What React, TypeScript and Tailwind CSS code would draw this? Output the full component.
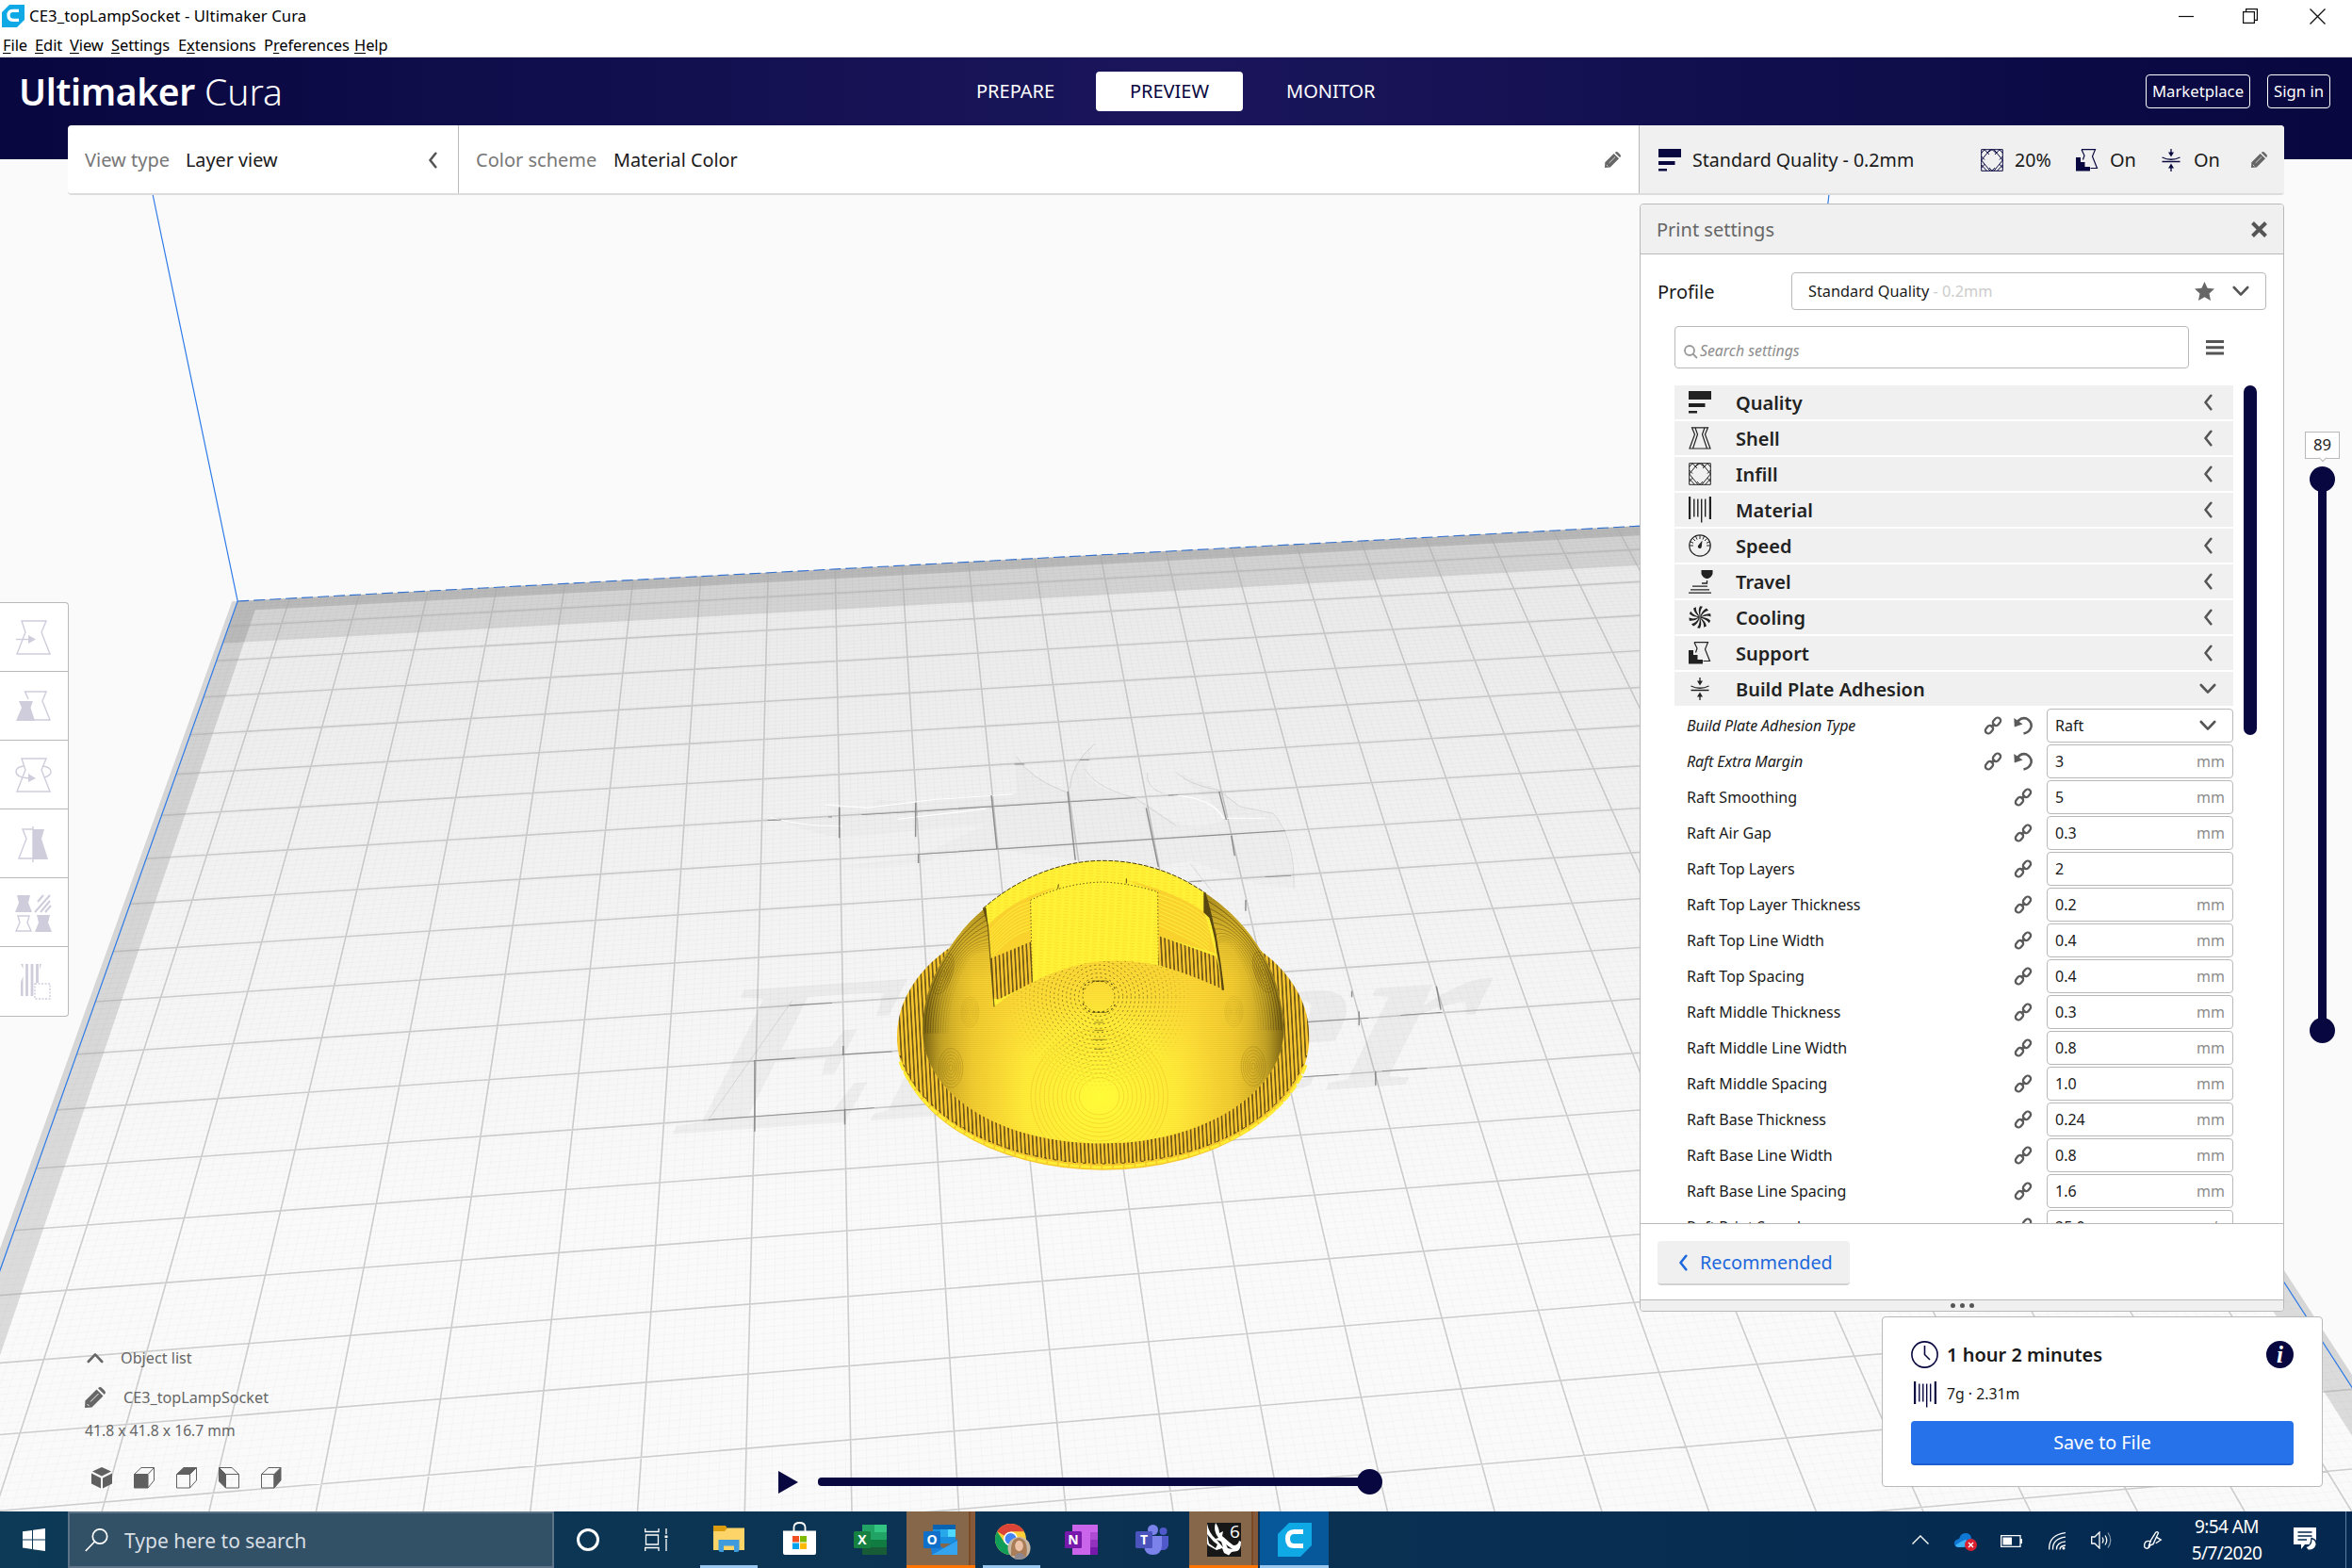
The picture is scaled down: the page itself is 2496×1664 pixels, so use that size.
import React from "react";

/* ---------- build plate projection ---------- */
const pt = (k: number, j: number): [number, number] => {
  const a = 0.0176 + 0.0426 * k;
  const b = -11.993 - 0.3746 * j;
  const h = 31143 / (a - b);
  return [857 + h * a, h - 1065];
};
const f = (p: [number, number]) => `${p[0].toFixed(1)} ${p[1].toFixed(1)}`;
const quad = (k0: number, k1: number, j0: number, j1: number) =>
  `M${f(pt(k0, j1))}L${f(pt(k1, j1))}L${f(pt(k1, j0))}L${f(pt(k0, j0))}Z`;
const K0 = -8.75, K1 = 14.75, J0 = -5.75, J1 = 17.75;
let major = "";
for (let k = -8; k <= 14; k++) major += `M${f(pt(k, J0))}L${f(pt(k, J1))}`;
for (let j = -5; j <= 17; j++) major += `M${f(pt(K0, j))}L${f(pt(K1, j))}`;
let minor = "";
for (let n = 0; n <= 235; n++) {
  minor += `M${f(pt(K0 + n / 10, J0))}L${f(pt(K0 + n / 10, J1))}`;
  minor += `M${f(pt(K0, J0 + n / 10))}L${f(pt(K1, J0 + n / 10))}`;
}

const rings = (n: number, step: number) => Array.from({ length: n }, (_, i) => (i + 1) * step);

function Model() {
  const body =
    "M118 590C116 520 130 455 165 385C205 305 255 240 318 190L326 260L343 505C390 470 430 445 500 412C570 380 640 362 700 360C760 358 820 362 870 374C950 395 1020 425 1077 452L1050 260L1015 142C1110 205 1165 275 1205 345C1245 415 1265 500 1267 580C1266 780 1010 940 690 940C370 940 125 790 118 590Z";
  return (
    <g transform="translate(940 900) scale(0.33333)">
      <defs>
        <pattern id="raft" width="12.6" height="12" patternUnits="userSpaceOnUse" patternTransform="rotate(-3)">
          <rect width="12.6" height="12" fill="#f7c730" />
          <rect width="5" height="12" fill="#6f5516" />
        </pattern>
        <pattern id="layers" width="6" height="6" patternUnits="userSpaceOnUse">
          <rect width="6" height="3" fill="#e8b21e" fillOpacity="0.4" />
        </pattern>
        <pattern id="flat" width="24" height="9" patternUnits="userSpaceOnUse" patternTransform="rotate(3)">
          <rect width="24" height="9" fill="#fff236" />
          <rect width="15" height="3" fill="#fde02e" />
        </pattern>
        <linearGradient id="side">
          <stop offset="0" stopColor="#4a3a08" stopOpacity="0.75" />
          <stop offset="0.05" stopColor="#6b5410" stopOpacity="0.4" />
          <stop offset="0.14" stopColor="#b98d18" stopOpacity="0.18" />
          <stop offset="0.28" stopColor="#e0b020" stopOpacity="0" />
          <stop offset="0.72" stopColor="#e0b020" stopOpacity="0" />
          <stop offset="0.86" stopColor="#b98d18" stopOpacity="0.18" />
          <stop offset="0.95" stopColor="#6b5410" stopOpacity="0.4" />
          <stop offset="1" stopColor="#4a3a08" stopOpacity="0.75" />
        </linearGradient>
        <linearGradient id="shade" x1="0" y1="0" x2="0" y2="1">
          <stop offset="0" stopColor="#4a3a08" stopOpacity="0.5" />
          <stop offset="0.35" stopColor="#6b5410" stopOpacity="0.12" />
          <stop offset="0.6" stopColor="#6b5410" stopOpacity="0" />
        </linearGradient>
        <radialGradient id="glow" gradientUnits="userSpaceOnUse" cx="680" cy="790" r="480">
          <stop offset="0" stopColor="#fffb38" />
          <stop offset="0.5" stopColor="#fff038" stopOpacity="0.75" />
          <stop offset="1" stopColor="#fbd838" stopOpacity="0" />
        </radialGradient>
        <radialGradient id="dotfade" gradientUnits="userSpaceOnUse" cx="680" cy="480" r="300">
          <stop offset="0" stopColor="#eee" />
          <stop offset="0.5" stopColor="#999" />
          <stop offset="1" stopColor="#000" />
        </radialGradient>
        <mask id="dotmask" maskUnits="userSpaceOnUse" x="300" y="340" width="800" height="450">
          <rect x="300" y="340" width="800" height="450" fill="url(#dotfade)" />
        </mask>
        <clipPath id="bodyclip"><path d={body} /></clipPath>
      </defs>
      <ellipse cx="692" cy="604" rx="656" ry="421" fill="#f5c92c" />
      <path d="M45 680C120 880 380 1014 692 1016C1000 1014 1270 880 1338 690" fill="none" stroke="#ffec35" strokeWidth="9" strokeDasharray="30 5" />
      <ellipse cx="692" cy="592" rx="655" ry="413" fill="url(#raft)" />
      <path d="M45 660C110 860 380 1003 692 1005C1000 1003 1270 870 1340 660" fill="none" stroke="#584410" strokeWidth="3" strokeDasharray="9 22" />
      {/* far rim and inner cavity */}
      <path d="M310 192C420 95 560 40 690 40C810 40 920 75 1020 145L1075 450L700 480L343 505Z" fill="url(#flat)" />
      <path d="M310 192C420 95 560 40 690 40C810 40 920 75 1020 145" fill="none" stroke="#4a3d0c" strokeWidth="3" strokeDasharray="14 5" />
      <path d="M325 245C390 180 470 140 550 122L466 160L463 300L333 352Z" fill="#f9d22e" />
      <path d="M766 102C870 125 960 165 1015 205L1050 335L868 280L866 140Z" fill="#f9d22e" />
      <g fill="none" stroke="#ffee38" strokeWidth="3">
        {rings(9, 11).map((r) => (
          <path key={r} d={`M${333} ${250 + r}C${390} ${190 + r} 420 ${170 + r} 463 ${160 + r}`} />
        ))}
        {rings(9, 12).map((r) => (
          <path key={r} d={`M868 ${135 + r}C${950 - r / 3} ${160 + r} 1000 ${190 + r} 1030 ${225 + r}`} />
        ))}
      </g>
      <path d="M462 165C530 130 610 110 690 108C750 110 810 122 866 140L868 374L700 362L466 430Z" fill="url(#flat)" />
      <path d="M466 430L461 166C530 130 610 110 690 108C750 110 810 122 866 140L868 374" fill="none" stroke="#5d4b0e" strokeWidth="3" strokeDasharray="4 7" />
      <path d="M548 130L550 115M766 112V97" stroke="#5d4b0e" strokeWidth="3" />
      <path d="M333 352L463 298L468 428L343 490Z" fill="url(#raft)" />
      <path d="M868 279L1052 345L1077 452L868 372Z" fill="url(#raft)" />
      {/* outer shell */}
      <path d={body} fill="#fddc38" />
      <path d={body} fill="url(#layers)" />
      <path d={body} fill="url(#glow)" />
      <path d={body} fill="url(#side)" />
      <g clipPath="url(#bodyclip)">
        <path d="M100 600V160H318L343 505Z" fill="url(#shade)" />
        <path d="M1290 600V130H1015L1077 452Z" fill="url(#shade)" />
      </g>
      <g clipPath="url(#bodyclip)" fill="none">
        <g stroke="#3b3008" strokeWidth="2.5" strokeDasharray="6 9" mask="url(#dotmask)">
          {rings(22, 13).map((r) => (
            <ellipse key={r} cx="678" cy="473" rx={38 + r} ry={36 + r} />
          ))}
          <path d="M628 452q2-20 25-28h50q22 8 28 28M628 494q4 20 25 28h50q22-8 28-28" strokeWidth="4" />
        </g>
        <g stroke="#3b3008" strokeWidth="2.5" strokeOpacity="0.6">
          <path d="M656 423h48M656 523h48M664 555h30M664 581h30M660 610h38M664 640h30" />
        </g>
        <g stroke="#e9b824" strokeWidth="2.5" strokeOpacity="0.5">
          {rings(12, 14).map((r) => (
            <ellipse key={r} cx="680" cy="790" rx={50 + r} ry={45 + r} />
          ))}
        </g>
        <g stroke="#6b5310" strokeWidth="2.5" strokeOpacity="0.4">
          {rings(6, 8).map((r) => (
            <React.Fragment key={r}>
              <ellipse cx="182" cy="400" rx={r * 0.6} ry={r * 1.4} transform="rotate(18 182 400)" />
              <ellipse cx="1203" cy="395" rx={r * 0.6} ry={r * 1.4} transform="rotate(-18 1203 395)" />
              <ellipse cx="207" cy="700" rx={r * 0.8} ry={r * 1.3} strokeOpacity="0.28" />
              <ellipse cx="1170" cy="695" rx={r * 0.8} ry={r * 1.3} strokeOpacity="0.28" />
              <ellipse cx="268" cy="522" rx={r * 0.6} ry={r} strokeOpacity="0.12" />
              <ellipse cx="1108" cy="520" rx={r * 0.6} ry={r} strokeOpacity="0.12" />
            </React.Fragment>
          ))}
        </g>
        <g stroke="#3b2f08" strokeWidth="3">
          {rings(10, 8).map((r) => (
            <React.Fragment key={r}>
              <path d={`M${318 + r} ${190 + r * 2}C${255 + r} ${240 + r} ${205 + r} 305 ${165 + r} 385C${130 + r} 455 ${118 + r} 520 ${118 + r} 590`} strokeOpacity={0.6 - r / 150} />
              <path d={`M${1018 + r / 2} ${142 + r * 3}C${1110 - r} ${205 + r} ${1165 - r} 275 ${1205 - r} 345C${1245 - r} 415 ${1265 - r} 500 ${1267 - r} 580`} strokeOpacity={0.6 - r / 150} />
            </React.Fragment>
          ))}
        </g>
      </g>
      <path d="M343 505V478L372 485Z" fill="#fff035" />
      <path d="M310 192L318 190L326 260L345 505L333 352L325 245Z" fill="#5d4a12" stroke="#5d4a12" strokeWidth="2" />
      <path d="M1012 142H1018C1040 210 1065 330 1077 452H1070C1064 380 1052 290 1030 222L1012 205Z" fill="#594711" />
    </g>
  );
}

function Scene() {
  return (
    <svg className="absolute inset-0" width="2496" height="1543" viewBox="0 61 2496 1543">
      <defs>
        <linearGradient id="plate" gradientUnits="userSpaceOnUse" x1="0" y1="560" x2="0" y2="1300">
          <stop offset="0" stopColor="#e9e9e9" />
          <stop offset="0.6" stopColor="#f4f4f4" />
          <stop offset="1" stopColor="#fafafa" />
        </linearGradient>
      </defs>
      <rect y="61" width="2496" height="1543" fill="#fafafa" />
      <path d={quad(K0 - 0.08, K1 + 0.08, J0, J1)} fill="#d6d6d6" />
      <path d={quad(K0, K1, J0, J1)} fill="url(#plate)" />
      <path d={minor} stroke="#000" strokeOpacity="0.025" fill="none" />
      <path d={quad(K0, K1, J0, J1) + quad(-8.45, 14.45, -5.45, 17.45)} fillRule="evenodd" fill="#000" fillOpacity="0.12" />
      <path d={quad(K0, K1, 16.5, J1)} fill="#000" fillOpacity="0.1" />
      <path d={major} stroke="#a8a8a8" strokeOpacity="0.55" strokeWidth="1.6" fill="none" />
      <path d={`M162 206L${f(pt(K0, J1))}L${f(pt(K0, J0))}M${f(pt(K1, J1))}L${f(pt(K1, J0))}M1941 206L1900 560`} fill="none" stroke="#2f7be8" strokeWidth="1.2" />
      <path d={`M${f(pt(K0, J1))}L${f(pt(K1, J1))}`} fill="none" stroke="#2f6fd0" strokeWidth="1.1" strokeDasharray="12 5" />
      {/* plate artwork */}
      <text
        transform="matrix(1 -0.068 -0.5 1 708 1204)"
        fontFamily="Liberation Serif"
        fontWeight="bold"
        fontSize="234"
        textLength="828"
        lengthAdjust="spacingAndGlyphs"
        fill="#000"
        fillOpacity="0.04"
      >
        Ender
      </text>
      <g transform="translate(700 780) scale(0.58673 0.33333)">
        <path
          d="M195 260C260 300 300 325 330 325C420 320 460 300 590 285L470 385L320 420C360 430 480 415 500 390L610 365L760 400L905 420L960 400L1090 480L1145 485C1150 400 1140 320 1110 250L1050 230L1020 180L940 120C960 180 1000 190 1020 270C980 300 940 300 890 230C850 180 790 190 770 120L785 30C750 80 740 120 740 180C690 150 660 110 645 70L645 185C560 190 500 200 460 215L395 205L380 235L300 225L330 262Z"
          fill="#000"
          fillOpacity="0.015"
        />
        <g fill="none" stroke="#fff" strokeWidth="3">
          <path d="M300 222L375 232L500 205L640 188M430 268L590 235M200 262Q260 292 330 290M930 192Q1000 200 1020 265L1095 265" />
        </g>
        <g fill="none" stroke="#777" strokeWidth="2.5" strokeOpacity="0.8">
          <path d="M195 272L220 270M305 261L312 261M365 254L462 244L588 229L860 200M325 230V328M463 215V325M600 192L610 362M738 180L752 398M468 380L752 347L893 331L1132 305M880 232L902 420M468 378V408M1012 180L1025 270M1034 320L1040 385M642 93H660M760 80H777M920 192L938 191M1095 452L1142 448M960 466L980 465M1060 525V560" />
          <path d="M235 861L312 853M172 1037L245 1029M88 1225L388 1187M172 1035V1262M335 1190V1240M332 990V1020M330 1017L420 1008M1172 913L1282 901M1265 880V925M1165 1088L1228 1081M1340 892L1415 883M1405 800L1413 875M1307 1070L1388 1061M1295 1070V1115M1252 815V835" />
        </g>
        <g fill="none" stroke="#999" strokeWidth="1" strokeOpacity="0.6">
          <path d="M645 68Q670 140 735 182M787 28Q745 90 742 170M770 110Q790 170 860 200L935 290M882 120Q880 170 910 185M935 120Q960 160 1010 175L1050 228L1110 250Q1150 330 1147 490M960 410L1000 500M240 845L90 1220" />
        </g>
      </g>
      <Model />
    </svg>
  );
}

/* ---------- icons ---------- */
type P = { className?: string };
const Chev = ({ d, className, w = 10, h = 18 }: { d: string; className?: string; w?: number; h?: number }) => (
  <svg className={className} width={w} height={h} viewBox={`0 0 ${w} ${h}`} fill="none" stroke="currentColor" strokeWidth="2.6" strokeLinecap="round" strokeLinejoin="round">
    <path d={d} />
  </svg>
);
const ChevLeft = ({ className }: P) => <Chev className={className} d="M8.3 1.8L2.5 9L8.3 16.2" />;
const ChevDown = ({ className }: P) => <Chev className={className} w={18} h={12} d="M1.8 2L9 9.6L16.2 2" />;
const Pencil = ({ className, size = 17 }: P & { size?: number }) => (
  <svg className={className} width={size} height={size} viewBox="0 0 22 22" fill="#666">
    <path d="M0 22L.5 14.5L12.500 2.500L19.500 9.500L7.500 21.500Z" />
    <path d="M14 1.200Q16-.8 18 .8L21.200 4Q22.800 6 20.800 8Z" />
    <path d="M6 15.500L14.500 7M2.500 18L4.500 20" stroke="#f4f4f4" strokeWidth="1" />
  </svg>
);
const S = ({ children, w = 24, h = 24, className }: { children: React.ReactNode; w?: number; h?: number; className?: string }) => (
  <svg className={className} width={w} height={h} viewBox={`0 0 ${w} ${h}`} fill="none" stroke="currentColor" strokeWidth="1.2">
    {children}
  </svg>
);
const QualityIcon = () => <S><path d="M0 0H24V9H0ZM0 13H17.500V17H0ZM0 21H9V23.500H0Z" fill="currentColor" stroke="none" /></S>;
const ShellIcon = () => <S><path d="M3.500 .8H20.500L17.500 8L23 23H1L6.500 8ZM7 1L9.500 8L4.500 23M17 1L14.500 8L19.500 23" /></S>;
const InfillIcon = () => (
  <S><path d="M.7 .7H23.300V23.300H.7ZM4 .7L.7 4.500M10 .7L.7 12M14 .7L23.300 12M20 .7L23.300 4.500M4 .7L9 6M7 4L12 .7L17 5M20 .7L15 6M.7 12L10 23.300M23.300 12L14 23.300M.7 20L4.500 16M.7 17L6.500 23.300M23.300 20L19.500 16M23.300 17L17.500 23.300M9 20L12 23.300L15 20M.7 8L4 11.500M23.300 8L20 11.500" strokeWidth="1" /></S>
);
const MaterialIcon = () => (
  <S h={28}><path d="M1.100 0V24M22.900 0V24" strokeWidth="2.200" /><path d="M5.800 2.500V21.500M9.800 2.500V21.500M13.700 2.500V27.500M17.700 2.500V21.500" strokeWidth="1.400" /></S>
);
const SpeedIcon = () => (
  <S><circle cx="12" cy="12" r="11.2" /><path d="M12 1V5M1 12H5M19 12H23M4.500 4.500L7 7M17 7L19.500 4.500M7.500 2L9 5.500M2 8L5 9.300M19 9.300L22 8M16.500 2L15 5.500" strokeWidth="1" /><path d="M14.500 6.500L13.800 13A2 2 0 1 1 10.500 11.500Z" fill="currentColor" stroke="none" /></S>
);
const TravelIcon = () => (
  <S w={26} h={25}><path d="M13.500 0H25.500V4Q24 8 20.500 9H18.500Q15 8 13.500 4Z" fill="currentColor" stroke="none" /><path d="M19.500 11V14H14M4 17.200H20M2 20.800H22M0 24.200H24" strokeWidth="1.300" /></S>
);
const CoolingIcon = () => (
  <S>{[0, 36, 72, 108, 144, 180, 216, 252, 288, 324].map((a) => (
    <path key={a} transform={`rotate(${a} 12 12)`} d="M12 11.500Q9.500 5 12 .2L15 .8Q11.500 5 12.600 11.500Z" fill="currentColor" stroke="none" />
  ))}</S>
);
const SupportIcon = () => (
  <S><path d="M6 .7H20.500L17.500 8L22.500 20.500H15.500M6 .7L9 7L7.500 11.500" /><path d="M0 9H5V14H9.500V19H15V23.500H0Z" fill="currentColor" stroke="none" /></S>
);
const AdhesionIcon = () => (
  <S><path d="M12 0V5M12 19V24M2.500 9Q12 13.500 21.500 9M2.500 13.500H21.500" strokeWidth="1.300" /><path d="M9 3.500H15L12 8.500ZM9 20.500H15L12 15.500Z" fill="currentColor" stroke="none" /></S>
);
const LinkIcon = () => (
  <svg width="20" height="20" viewBox="0 0 20 20" fill="none" stroke="#5a5a5a" strokeWidth="2.300">
    <rect x="-4.600" y="-3.200" width="9.200" height="6.400" rx="3.200" transform="translate(14 5.800) rotate(-50)" />
    <rect x="-4.600" y="-3.200" width="9.200" height="6.400" rx="3.200" transform="translate(6 14.200) rotate(-50)" />
    <path d="M8 12L12 8" />
  </svg>
);
const ResetIcon = () => (
  <svg width="20" height="20" viewBox="0 0 20 20" fill="none" stroke="#5a5a5a" strokeWidth="2.600">
    <path d="M4 6Q8 .8 13.500 2.500Q19.500 6 18.500 11.500Q17 17 10.500 18.500" />
    <path d="M.3 2L.8 11.500L9.500 8.500Z" fill="#5a5a5a" stroke="none" />
  </svg>
);

/* ---------- data ---------- */
const categories: [string, () => React.ReactElement][] = [
  ["Quality", QualityIcon], ["Shell", ShellIcon], ["Infill", InfillIcon], ["Material", MaterialIcon], ["Speed", SpeedIcon],
  ["Travel", TravelIcon], ["Cooling", CoolingIcon], ["Support", SupportIcon], ["Build Plate Adhesion", AdhesionIcon],
];
const settings: [string, string, string][] = [
  ["Raft Extra Margin", "3", "mm"], ["Raft Smoothing", "5", "mm"], ["Raft Air Gap", "0.3", "mm"], ["Raft Top Layers", "2", ""],
  ["Raft Top Layer Thickness", "0.2", "mm"], ["Raft Top Line Width", "0.4", "mm"], ["Raft Top Spacing", "0.4", "mm"],
  ["Raft Middle Thickness", "0.3", "mm"], ["Raft Middle Line Width", "0.8", "mm"], ["Raft Middle Spacing", "1.0", "mm"],
  ["Raft Base Thickness", "0.24", "mm"], ["Raft Base Line Width", "0.8", "mm"], ["Raft Base Line Spacing", "1.6", "mm"],
  ["Raft Print Speed", "25.0", "mm/s"],
];
const menus: [string, string, string, string][] = [
  ["", "F", "ile", "w-[34px]"], ["", "E", "dit", "w-[37px]"], ["", "V", "iew", "w-[44px]"], ["", "S", "ettings", "w-[71px]"],
  ["E", "x", "tensions", "w-[91px]"], ["P", "r", "eferences", "w-[96px]"], ["", "H", "elp", "w-[40px]"],
];

function SettingsPanel() {
  return (
    <section className="absolute left-[1740px] top-[155px] flex h-[1176px] w-[684px] flex-col overflow-hidden rounded border border-[#b9b9b9] bg-white">
      <header className="flex h-[53px] shrink-0 items-center justify-between border-b border-[#b9b9b9] bg-[#f0f0f0] pl-[17px] pr-[17px] pt-px text-[20px] text-[#666]">
        <span>Print settings</span>
        <svg width="17" height="17" viewBox="0 0 17 17" stroke="#555" strokeWidth="4"><path d="M1.500 1.500L15.500 15.500M15.500 1.500L1.500 15.500" /></svg>
      </header>
      <div className="mt-[19px] flex h-[40px] shrink-0 items-center pl-[18px]">
        <span className="w-[142px] pt-px text-[20px] text-[#191919]">Profile</span>
        <div className="flex h-[40px] w-[504px] items-center rounded border border-[#b9b9b9] pl-[17px] pr-[17px] text-[16.3px] text-[#191919]">
          <span className="whitespace-pre">Standard Quality</span>
          <span className="whitespace-pre text-[#ccc]"> - 0.2mm</span>
          <svg className="ml-auto" width="21" height="20" viewBox="0 0 21 20" fill="#666"><path d="M10.500 0L13.600 6.700L21 7.600L15.500 12.600L17 20L10.500 16.300L4 20L5.500 12.600L0 7.600L7.400 6.700Z" /></svg>
          <ChevDown className="ml-[19px] text-[#555]" />
        </div>
      </div>
      <div className="mt-[17px] flex h-[45px] shrink-0 items-center pl-[36px]">
        <div className="flex h-[45px] w-[546px] items-center rounded-sm border border-[#b9b9b9] pl-[9px] pt-[9px] text-[15.8px] italic text-[#8c8c8c]">
          <svg width="15" height="15" viewBox="0 0 15 15" fill="none" stroke="#999" strokeWidth="1.8"><circle cx="6" cy="6" r="5" /><path d="M9.500 9.500L14 14" /></svg>
          <span className="ml-[2px]">Search settings</span>
        </div>
        <svg className="ml-[18px]" width="19" height="16" viewBox="0 0 19 16" fill="#555"><path d="M0 0H19V3H0ZM0 6.300H19V9.300H0ZM0 12.600H19V15.600H0Z" /></svg>
      </div>
      <div className="mt-[18px] flex h-[890px] shrink-0 overflow-hidden border-b border-[#b9b9b9] pl-[36px]">
        <div className="w-[593px] shrink-0">
          {categories.map(([name, Icon], i) => (
            <div key={name} className="mb-[2px] flex h-[36px] items-center bg-[#f0f0f0] pl-[15px] pr-[22px] text-[#222]">
              <span className="flex w-[50px]"><Icon /></span>
              <span className="pt-px text-[20px] font-semibold leading-none">{name}</span>
              {i < 8 ? <ChevLeft className="ml-auto text-[#555]" /> : <ChevDown className="-mr-[4px] ml-auto text-[#555]" />}
            </div>
          ))}
          <div className="flex h-[38px] items-center pl-[13px] text-[16px] text-[#191919]">
            <span className="w-[315px] italic tracking-[-0.1px]">Build Plate Adhesion Type</span>
            <LinkIcon />
            <span className="ml-[12px]"><ResetIcon /></span>
            <span className="ml-auto flex h-[36px] w-[198px] items-center justify-between rounded-sm border border-[#b9b9b9] pl-[8px] pr-[17px]">
              Raft
              <ChevDown className="text-[#555]" />
            </span>
          </div>
          {settings.map(([name, value, unit], i) => (
            <div key={name} className="flex h-[38px] items-center pl-[13px] text-[16px] text-[#191919]">
              <span className={i === 0 ? "w-[315px] italic tracking-[-0.1px]" : "w-[347px]"}>{name}</span>
              <LinkIcon />
              {i === 0 && <span className="ml-[12px]"><ResetIcon /></span>}
              <span className="ml-auto flex h-[36px] w-[198px] items-center justify-between rounded-sm border border-[#b9b9b9] px-[8px]">
                {value}
                <span className="text-[#8c8c8c]">{unit}</span>
              </span>
            </div>
          ))}
        </div>
        <div className="ml-[11px] h-[371px] w-[14px] rounded-full bg-[#08073f]" />
      </div>
      <div className="flex h-[81px] shrink-0 items-start border-b border-[#b9b9b9] pl-[18px] pt-[18px]">
        <button className="flex h-[47px] w-[204px] items-center rounded-sm border-b-2 border-[#d2d2d2] bg-[#f0f0f0] pl-[22px] text-[19.8px] text-[#1c68dc]">
          <ChevLeft className="mr-[13px]" />
          Recommended
        </button>
      </div>
      <div className="flex flex-1 items-center justify-center gap-[5px] bg-[#f0f0f0]">
        <i className="size-[5px] rounded-full bg-[#555]" /><i className="size-[5px] rounded-full bg-[#555]" /><i className="size-[5px] rounded-full bg-[#555]" />
      </div>
    </section>
  );
}

function ViewBar() {
  return (
    <div className="absolute left-[72px] top-[72px] flex h-[74px] w-[2352px] overflow-hidden rounded border-b-2 border-[#dcdcdc] bg-white text-[20px]">
      <div className="flex w-[415px] items-center border-r border-[#b9b9b9] pl-[18px] pr-[22px] pt-px">
        <span className="w-[107px] text-[#777]">View type</span>
        <span className="text-[19.8px] text-[#191919]">Layer view</span>
        <ChevLeft className="ml-auto text-[#555]" />
      </div>
      <div className="flex w-[1253px] items-center border-r border-[#b9b9b9] pl-[18px] pr-[19px] pt-px">
        <span className="w-[146px] text-[#777]">Color scheme</span>
        <span className="text-[19.8px] text-[#191919]">Material Color</span>
        <Pencil className="ml-auto" />
      </div>
      <div className="flex flex-1 items-center bg-[#f0f0f0] pl-[20px] pt-px text-[#191919]">
        <span className="w-[36px] text-[#08073f]"><QualityIcon /></span>
        <span className="w-[306px] text-[19.6px]">Standard Quality - 0.2mm</span>
        <span className="w-[36px] text-[#08073f]"><InfillIcon /></span>
        <span className="w-[65px] text-[19.6px]">20%</span>
        <span className="w-[36px] text-[#08073f]"><SupportIcon /></span>
        <span className="w-[53px]">On</span>
        <span className="w-[36px] text-[#08073f]"><AdhesionIcon /></span>
        <span className="w-[61px]">On</span>
        <Pencil />
      </div>
    </div>
  );
}

const HG = "M6 1H32L27 13L36 36H1L10 13Z";
function ToolBar() {
  const tools = [
    <g key="a" fill="none"><path d={HG} /><path d="M0 20.500H14" /><path d="M13 16L21 20.500L13 25Z" fill="#cfcddb" stroke="none" /></g>,
    <g key="b" fill="none"><path d="M13 11L9.500 3H32L28 13L36 33H19" /><path d="M3 13H18L15.500 20L20 34H0L6 20Z" fill="#cfcddb" stroke="none" /></g>,
    <g key="c" fill="none"><path d={HG} /><path d="M8 9Q0 10 0 15Q0 21 14 22M28 9Q37 10 37 15Q37 19 30 21" /><path d="M13 17L21 22L13 26Z" fill="#cfcddb" stroke="none" /></g>,
    <g key="d" fill="none"><path d="M18 3H7L11 13L3 34H18M18 0V38" /><path d="M18 3H30L27 13L34 35H18Z" fill="#cfcddb" stroke="none" /></g>,
    <g key="e" fill="none"><path d="M1 0H15L13 8L17 18H-1L3 8ZM22 21H36L34 29L38 39H20L24 29Z" fill="#cfcddb" stroke="none" /><path d="M2 22H14L12 29L16 38H0L4 29Z" /><path d="M23 7L29 0M20 18L36 0M26 18L36 6M31 18L37 11" strokeWidth="2" /></g>,
    <g key="f" fill="none"><path d="M5 0L7.500 5V0ZM5 34V19L7.500 13V34ZM27 0L25 6V0ZM1 34V31Z" fill="#cfcddb" stroke="none" /><path d="M11.500 0V34M17 0V34M22.500 0V20" strokeWidth="2.800" /><path d="M20 21H36V37H20Z" strokeDasharray="2 1.500" /></g>,
  ];
  return (
    <nav className="absolute left-0 top-[578px] flex w-[73px] flex-col divide-y divide-[#b9b9b9] rounded-r border border-l-0 border-[#b9b9b9] bg-white">
      {tools.map((t, i) => (
        <div key={i} className="flex h-[73px] items-center pl-[17px]">
          <svg className="overflow-visible" width="37" height="37" viewBox="0 0 37 37" stroke="#cfcddb" strokeWidth="1.4">{t}</svg>
        </div>
      ))}
    </nav>
  );
}

function ObjectInfo() {
  return (
    <div className="absolute left-[90px] top-[1367px] flex flex-col text-[16.2px] text-[#666]">
      <div className="flex h-[26px] items-center pl-[2px]"><Chev className="mr-[18px]" w={18} h={12} d="M1.800 10L9 2.400L16.200 10" /><span>Object list</span></div>
      <div className="mt-[16px] flex h-[26px] items-center"><Pencil size={22} /><span className="ml-[19px]">CE3_topLampSocket</span></div>
      <div className="mt-[10px] flex h-[26px] items-center text-[15.700px]">41.8 x 41.8 x 16.7 mm</div>
      <div className="mt-[25px] flex gap-[23px] pl-[7px]">
        <svg width="22" height="23" viewBox="0 0 22 23" fill="#606060"><path d="M11 0L21 4.500L11 9.500L1 4.500ZM0 6.500L10 11.500V22.500L0 17.500ZM22 6.500L12 11.500V22.500L22 17.500Z" /></svg>
        <svg width="22" height="23" viewBox="0 0 22 23" fill="none" stroke="#606060"><path d="M.5 7.500H15V22H.5Z" fill="#606060" /><path d="M.5 7.500L8 .5H21.500L15 7.500M21.500 .5V14L15 22" /></svg>
        <svg width="22" height="23" viewBox="0 0 22 23" fill="none" stroke="#606060"><path d="M.5 7.500H14.500V22H.5ZM21.500 .5V14L14.500 22" /><path d="M.5 7.500L8 .5H21.500L14.500 7.500Z" fill="#606060" /></svg>
        <svg width="22" height="23" viewBox="0 0 22 23" fill="none" stroke="#606060"><path d="M7.500 7.500H21.500V22H7.500ZM.5 .5H14L21.500 7.500" /><path d="M.5 .5L7.500 7.500V22L.5 15Z" fill="#606060" /></svg>
        <svg width="22" height="23" viewBox="0 0 22 23" fill="none" stroke="#606060"><path d="M.5 7.500H14V22H.5ZM.5 7.500L8 .5H21" /><path d="M14 7.500L21 .5V14L14 22Z" fill="#606060" /></svg>
      </div>
    </div>
  );
}

function ActionPanel() {
  return (
    <section className="absolute left-[1997px] top-[1336px] flex h-[181px] w-[468px] flex-col rounded border border-[#b9b9b9] bg-white px-[30px] text-[#08073f]">
      <div className="mt-[25px] flex h-[29px] items-center">
        <svg width="29" height="29" viewBox="0 0 29 29" fill="none" stroke="currentColor" strokeWidth="1.6"><circle cx="14.500" cy="14.500" r="13.600" /><path d="M14.500 5V14.500L20 20" /></svg>
        <span className="ml-[9px] text-[20px] font-semibold text-[#191919]">1 hour 2 minutes</span>
        <span className="ml-auto flex size-[29px] items-center justify-center rounded-full bg-[#08073f] font-['Liberation_Serif'] text-[25px] font-bold italic leading-none text-white">i</span>
      </div>
      <div className="mt-[14px] flex h-[28px] items-center pl-[3px]">
        <MaterialIcon />
        <span className="ml-[11px] text-[15.800px] text-[#191919]">7g · 2.31m</span>
      </div>
      <button className="mt-[14px] h-[47px] rounded-sm border-b-2 border-[#1b5fd0] bg-[#2672ea] text-[19.700px] text-white">Save to File</button>
    </section>
  );
}

/* ---------- taskbar ---------- */
const Office = ({ children, letter, tile, cls }: { children: React.ReactNode; letter: string; tile: string; cls?: string }) => (
  <svg className={cls} width="36" height="33" viewBox="0 0 36 33">
    {children}
    <rect x="0" y="7" width="18" height="18" rx="1.500" fill={tile} />
    <text x="9" y="21" textAnchor="middle" fontFamily="Open Sans" fontWeight="bold" fontSize="14" fill="#fff">{letter}</text>
  </svg>
);
const CuraLogo = ({ size }: { size: number }) => (
  <svg width={size} height={size} viewBox="0 0 36 36">
    <path d="M12 0H36V24L24 36H0V12Z" fill="#0fa9e6" />
    <path d="M27 9.500H17.500Q10.500 9.500 10.500 17Q10.500 24.500 17.500 24.500H27" fill="none" stroke="#fff" strokeWidth="5" />
  </svg>
);

function TaskBar() {
  return (
    <footer className="flex h-[60px] w-full shrink-0 bg-gradient-to-r from-[#0d3a56] via-[#0b3152] to-[#042850]">
      <div className="flex w-[72px] items-center justify-center">
        <svg width="24" height="24" viewBox="0 0 24 24" fill="#fff"><path d="M0 3.300L10 2V11.400H0ZM11 1.800L24 0V11.400H11ZM0 12.500H10V22L0 20.600ZM11 12.500H24V24L11 22.200Z" /></svg>
      </div>
      <div className="flex w-[516px] items-center border-2 border-[#5c7388] bg-[#335166] pl-[16px] text-[21px] text-[#d8dfe5]">
        <svg width="25" height="25" viewBox="0 0 25 25" fill="none" stroke="#fff" strokeWidth="1.7"><circle cx="16" cy="8.500" r="7.700" /><path d="M10.500 14L.8 24" /></svg>
        <span className="ml-[17px] pt-[2px]">Type here to search</span>
      </div>
      <div className="flex w-[72px] items-center justify-center"><i className="size-[24px] rounded-full border-[3px] border-white" /></div>
      <div className="flex w-[72px] items-center justify-center">
        <svg width="25" height="24" viewBox="0 0 25 24" fill="none" stroke="#fff" strokeWidth="1.3"><path d="M.7 0V3.500H15V0M.7 24V20.500H15V24M1.500 7H14.500V17H1.500ZM23 0V6M23 11V24" /><path d="M21.500 7.500H24.500V10H21.500Z" fill="#fff" stroke="none" /></svg>
      </div>
      <div className="relative flex w-[83px] items-center justify-center">
        <svg className="-mt-[2px]" width="33" height="28" viewBox="0 0 33 28"><path d="M0 0H13L15 3V8H0Z" fill="#dc9c10" /><path d="M0 6H12L15 2.500H33V26H0Z" fill="#fdd467" /><path d="M5.500 15H27.500V25.500Q27.500 28 25 28H22V21.500H11V28H8Q5.500 28 5.500 25.500Z" fill="#3f9bdc" /></svg>
        <i className="absolute bottom-0 left-[11px] h-[3px] w-[61px] bg-[#98c6ee]" />
      </div>
      <div className="flex w-[67px] items-center justify-center">
        <svg className="-mt-[4px]" width="35" height="35" viewBox="0 0 35 35"><path d="M11.500 12V5.500Q12 1 17.500 1Q23 1 23.500 5.500V12" fill="none" stroke="#fff" strokeWidth="1.800" /><path d="M0 9.500H35V33Q35 35 33 35H2Q0 35 0 33Z" fill="#fff" /><path d="M10 15H17V21.500H10Z" fill="#f25022" /><path d="M18 15H25V21.500H18Z" fill="#7fba00" /><path d="M10 22.500H17V29H10Z" fill="#00a4ef" /><path d="M18 22.500H25V29H18Z" fill="#ffb900" /></svg>
      </div>
      <div className="flex w-[80px] items-center justify-center pl-[3px]">
        <Office letter="X" tile="#15803f"><path d="M9 0H35V32H9Z" fill="#21a366" /><path d="M22 0H35V8H22Z" fill="#33c481" /><path d="M9 16H35V24H9Z" fill="#107c41" /><path d="M9 24H35V32H9Z" fill="#185c37" /></Office>
      </div>
      <div className="relative flex w-[73px] items-center justify-center border-b-[3px] border-[#ff7300] bg-[#86674a] pt-[3px] pr-[2px]">
        <Office letter="O" tile="#0f6fc9"><path d="M10 0H34V9H10Z" fill="#0a63b0" /><path d="M10 5H34V20H10Z" fill="#1a8fe0" /><path d="M26 5H34V13H26Z" fill="#50d9ff" /><path d="M18 5H26V13H18Z" fill="#28a8ea" /><path d="M7 18L22 25L36 15V32H9Z" fill="#1a80d8" /><path d="M9 32L36 17V32Z" fill="#35a4f0" /></Office>
        <i className="absolute right-0 top-0 h-[57px] w-[7px] border-l-2 border-[#7a4a26] bg-[#855939]" />
      </div>
      <div className="relative flex w-[79px] items-center justify-center">
        <svg className="mt-[3px]" width="38" height="38" viewBox="0 0 38 38">
          <circle cx="16.500" cy="16.500" r="16.500" fill="#fdd03b" />
          <path d="M16.500 16.500L2.200 8.300A16.500 16.500 0 0 1 30.800 8.300H16.500Z" fill="#db4437" />
          <path d="M2.200 8.300A16.500 16.500 0 0 0 16.500 33L23 20L10 20Z" fill="#109d58" />
          <circle cx="16.500" cy="16" r="7.600" fill="#fff" /><circle cx="16.500" cy="16" r="6" fill="#4285f4" />
          <circle cx="25.500" cy="26" r="12" fill="#c9b8a4" /><path d="M17 34Q16 22 20 17Q26 12 32 19Q35 26 33 35Z" fill="#a97d58" /><ellipse cx="25.500" cy="23.500" rx="4.300" ry="5.800" fill="#eec4a8" /><path d="M20 37Q22 31 26 31Q30 31 32 36Q26 39 20 37Z" fill="#8d8790" />
        </svg>
        <i className="absolute bottom-0 left-[8px] h-[3px] w-[61px] bg-[#98c6ee]" />
      </div>
      <div className="flex w-[67px] items-center justify-center">
        <Office letter="N" tile="#7719aa"><path d="M8 0H35V32H8Z" fill="#ca64ea" /><path d="M27 8H35V16H27Z" fill="#ae4bd5" /><path d="M27 16H35V24H27Z" fill="#9332bf" /><path d="M27 24H35V32H27Z" fill="#7719aa" /></Office>
      </div>
      <div className="flex w-[81px] items-center justify-center pl-[2px]">
        <Office letter="T" tile="#4b53bc"><circle cx="29.500" cy="7" r="4" fill="#5059c9" /><path d="M22 12H35V22Q34 27 29 27H22Z" fill="#5059c9" /><circle cx="18.500" cy="5.500" r="5.500" fill="#7b83eb" /><path d="M9 12H28V23Q27 32 18.500 32Q10 32 9 23Z" fill="#7b83eb" /></Office>
      </div>
      <div className="relative flex w-[73px] items-center justify-center border-b-[3px] border-[#ff7300] bg-[#86674a] pt-[3px]">
        <svg width="36" height="36" viewBox="0 0 36 36">
          <path d="M0 0H36V36H0Z" fill="#171717" />
          <path d="M0 1Q2 11 9 17L12 16Q6 8 9 0Q13 6 13 11L17 9L16 14L24 21L28 24Q33 24 34 19L36 20Q36 28 32 30L26 31L23 34.500L18 32L16 27L10 29L1 24L0 22Z" fill="#fff" />
          <path d="M0 12L7 20L11 23L9 27L2 22ZM10 18L17 26L15 20ZM20 23L27 28L22 27Z" fill="#171717" />
          <text x="24" y="16" fontFamily="Open Sans" fontSize="19" fill="#fff">6</text>
        </svg>
        <i className="absolute right-0 top-0 h-[57px] w-[7px] border-l-2 border-[#7a4a26] bg-[#855939]" />
      </div>
      <div className="ml-[2px] flex w-[73px] items-center justify-center border-b-[3px] border-[#98c6ee] bg-[#07589a] pt-[3px]"><CuraLogo size={36} /></div>
      <div className="ml-auto flex items-center text-white">
        <svg className="mr-[27px]" width="18" height="10" viewBox="0 0 18 10" fill="none" stroke="#fff" strokeWidth="1.400"><path d="M.5 9.500L9 1L17.500 9.500" /></svg>
        <svg className="mr-[25px] mt-[4px]" width="24" height="20" viewBox="0 0 24 20"><path d="M5 7Q7 0 13 1Q18 2 18 7Q23 8 22 13Q21 16 17 16H5Q0 16 0 11.500Q0 8 5 7Z" fill="#0f78d4" /><path d="M1 14Q8 9 12 8L20 15L5 16Q2 16 1 14Z" fill="#3db2f5" /><circle cx="17.500" cy="13.500" r="6.500" fill="#dc1f2e" /><path d="M15 11L20 16M20 11L15 16" stroke="#fff" strokeWidth="1.400" /></svg>
        <svg className="mr-[28px] mt-[2px]" width="23" height="13" viewBox="0 0 23 13" fill="none" stroke="#fff" strokeWidth="1.300"><path d="M.7 .7H21V12.300H.7ZM22.300 4V9" /><path d="M2.500 2.500H12V10.500H2.500Z" fill="#fff" stroke="none" /></svg>
        <svg className="mr-[27px] mt-[2px]" width="18" height="19" viewBox="0 0 18 19" fill="none" stroke="#fff" strokeWidth="1.300"><path d="M.7 18.500Q0 3 18 .7M4.500 18.500Q4 7 18 5.200M8.500 18.500Q8 11 18 9.800M12 18.500Q12 14.500 18 14" /><circle cx="16" cy="17" r="1.500" fill="#fff" stroke="none" /></svg>
        <svg className="mr-[33px]" width="22" height="19" viewBox="0 0 22 19" fill="none" stroke="#fff" strokeWidth="1.300"><path d="M.7 6H4L9 1V18L4 13H.7ZM12 6.500Q14 9.500 12 12.500M15 4.500Q18.500 9.500 15 14.500" /><path d="M18 1.500Q23.500 9.500 18 17.500" strokeOpacity=".5" /></svg>
        <svg className="mr-[28px] w-[22px]" width="24" height="21" viewBox="0 0 24 21" fill="none" stroke="#fff" strokeWidth="1.500"><path d="M7 17L9 11L15 1.500Q17 0 18 2L12 15ZM10 12Q3 10 2 15Q1 20 5 20Q9 19 8 15M16 7L21 10L15 14" /></svg>
        <div className="flex w-[78px] flex-col items-center text-[19px] leading-[28px] tracking-[-0.600px]"><span>9:54 AM</span><span>5/7/2020</span></div>
        <svg className="ml-[32px] mr-[30px]" width="25" height="26" viewBox="0 0 25 26"><path d="M0 0H24V18H12L8 23V18H0Z" fill="#fff" /><path d="M4.500 5H19.500M4.500 9H19.500M4.500 13H14" stroke="#06294e" strokeWidth="1.300" /><path d="M19 11.500Q25 13 24 19Q22 25 15 24L12.500 20.500Q19 20 19 11.500Z" fill="#fff" stroke="#06294e" strokeWidth="1.300" /></svg>
        <i className="mr-[6px] h-[60px] w-px bg-[#5c7da0]" />
      </div>
    </footer>
  );
}

export default function App() {
  return (
    <div className="flex h-[1664px] w-[2496px] flex-col overflow-hidden bg-white font-['Noto_Sans',sans-serif] leading-none">
      <div className="flex h-[36px] shrink-0 items-center pb-[2px] pl-[2px]">
        <CuraLogo size={24} />
        <span className="ml-[5px] text-[16.7px] tracking-[0.100px] text-black">CE3_topLampSocket - Ultimaker Cura</span>
        <div className="ml-auto flex items-center pr-[28px]">
          <svg className="mr-[52px]" width="16" height="16" viewBox="0 0 16 16" stroke="#111" strokeWidth="1.200"><path d="M0 8.500H16" /></svg>
          <svg className="mr-[55px]" width="16" height="16" viewBox="0 0 16 16" fill="none" stroke="#111" strokeWidth="1.200"><path d="M.6 3.600H12.400V15.400H.6ZM3.600 3.500V.6H15.400V12.400H12.500" /></svg>
          <svg width="17" height="17" viewBox="0 0 17 17" stroke="#111" strokeWidth="1.300"><path d="M.5 .5L16.500 16.500M16.500 .5L.5 16.500" /></svg>
        </div>
      </div>
      <div className="flex h-[25px] shrink-0 items-center border-b border-[#d9d9d9] pl-[3px] text-[16.5px] text-black">
        {menus.map(([a, u, b, w]) => (
          <span key={u} className={`${w} shrink-0 whitespace-nowrap tracking-[-0.1px]`}>{a}<u className="underline-offset-2">{u}</u>{b}</span>
        ))}
      </div>
      <main className="relative h-[1543px] shrink-0 overflow-hidden">
        <Scene />
        <header className="relative flex h-[108px] items-start bg-gradient-to-r from-[#08073f] via-[#1b165c] to-[#08073f] text-white">
          <div className="flex h-[70px] w-[1000px] items-center whitespace-pre pl-[20px] text-[39px]">
            <b className="font-semibold tracking-[-0.35px]">Ultimaker</b><span className="font-light"> Cura</span>
          </div>
          <div className="flex h-[72px] items-center text-[20px]">
            <span className="w-[163px] pl-[36px]">PREPARE</span>
            <span className="flex h-[42px] w-[156px] items-center justify-center rounded bg-white text-[#08073f]">PREVIEW</span>
            <span className="pl-[46px]">MONITOR</span>
          </div>
          <div className="ml-auto flex h-[72px] items-center gap-[18px] pr-[23px] text-[16.7px]">
            <span className="flex h-[36px] w-[111px] items-center justify-center rounded-sm border border-white">Marketplace</span>
            <span className="flex h-[36px] w-[67px] items-center justify-center rounded-sm border border-white">Sign in</span>
          </div>
        </header>
        <ViewBar />
        <ToolBar />
        <SettingsPanel />
        <ObjectInfo />
        <ActionPanel />
        <div className="absolute left-[2446px] top-[397px] flex w-[37px] flex-col items-center">
          <span className="flex h-[29px] w-[37px] items-center justify-center border border-[#b9b9b9] bg-white text-[16.7px] text-[#222]">89</span>
          <i className="-mt-[4px] size-[6px] rotate-45 border-b border-r border-[#b9b9b9] bg-white" />
          <i className="mt-[6px] size-[27px] rounded-full bg-[#08073f]" />
          <i className="-my-px h-[560px] w-[9px] bg-[#08073f]" />
          <i className="size-[27px] rounded-full bg-[#08073f]" />
        </div>
        <div className="absolute left-[826px] top-[1498px] flex h-[27px] items-center">
          <svg width="21" height="24" viewBox="0 0 21 24" fill="#08073f"><path d="M0 0L21 12L0 24Z" /></svg>
          <i className="ml-[21px] h-[9px] w-[574px] rounded-l bg-[#08073f]" />
          <i className="-ml-[2px] size-[27px] rounded-full bg-[#08073f]" />
        </div>
      </main>
      <TaskBar />
    </div>
  );
}
